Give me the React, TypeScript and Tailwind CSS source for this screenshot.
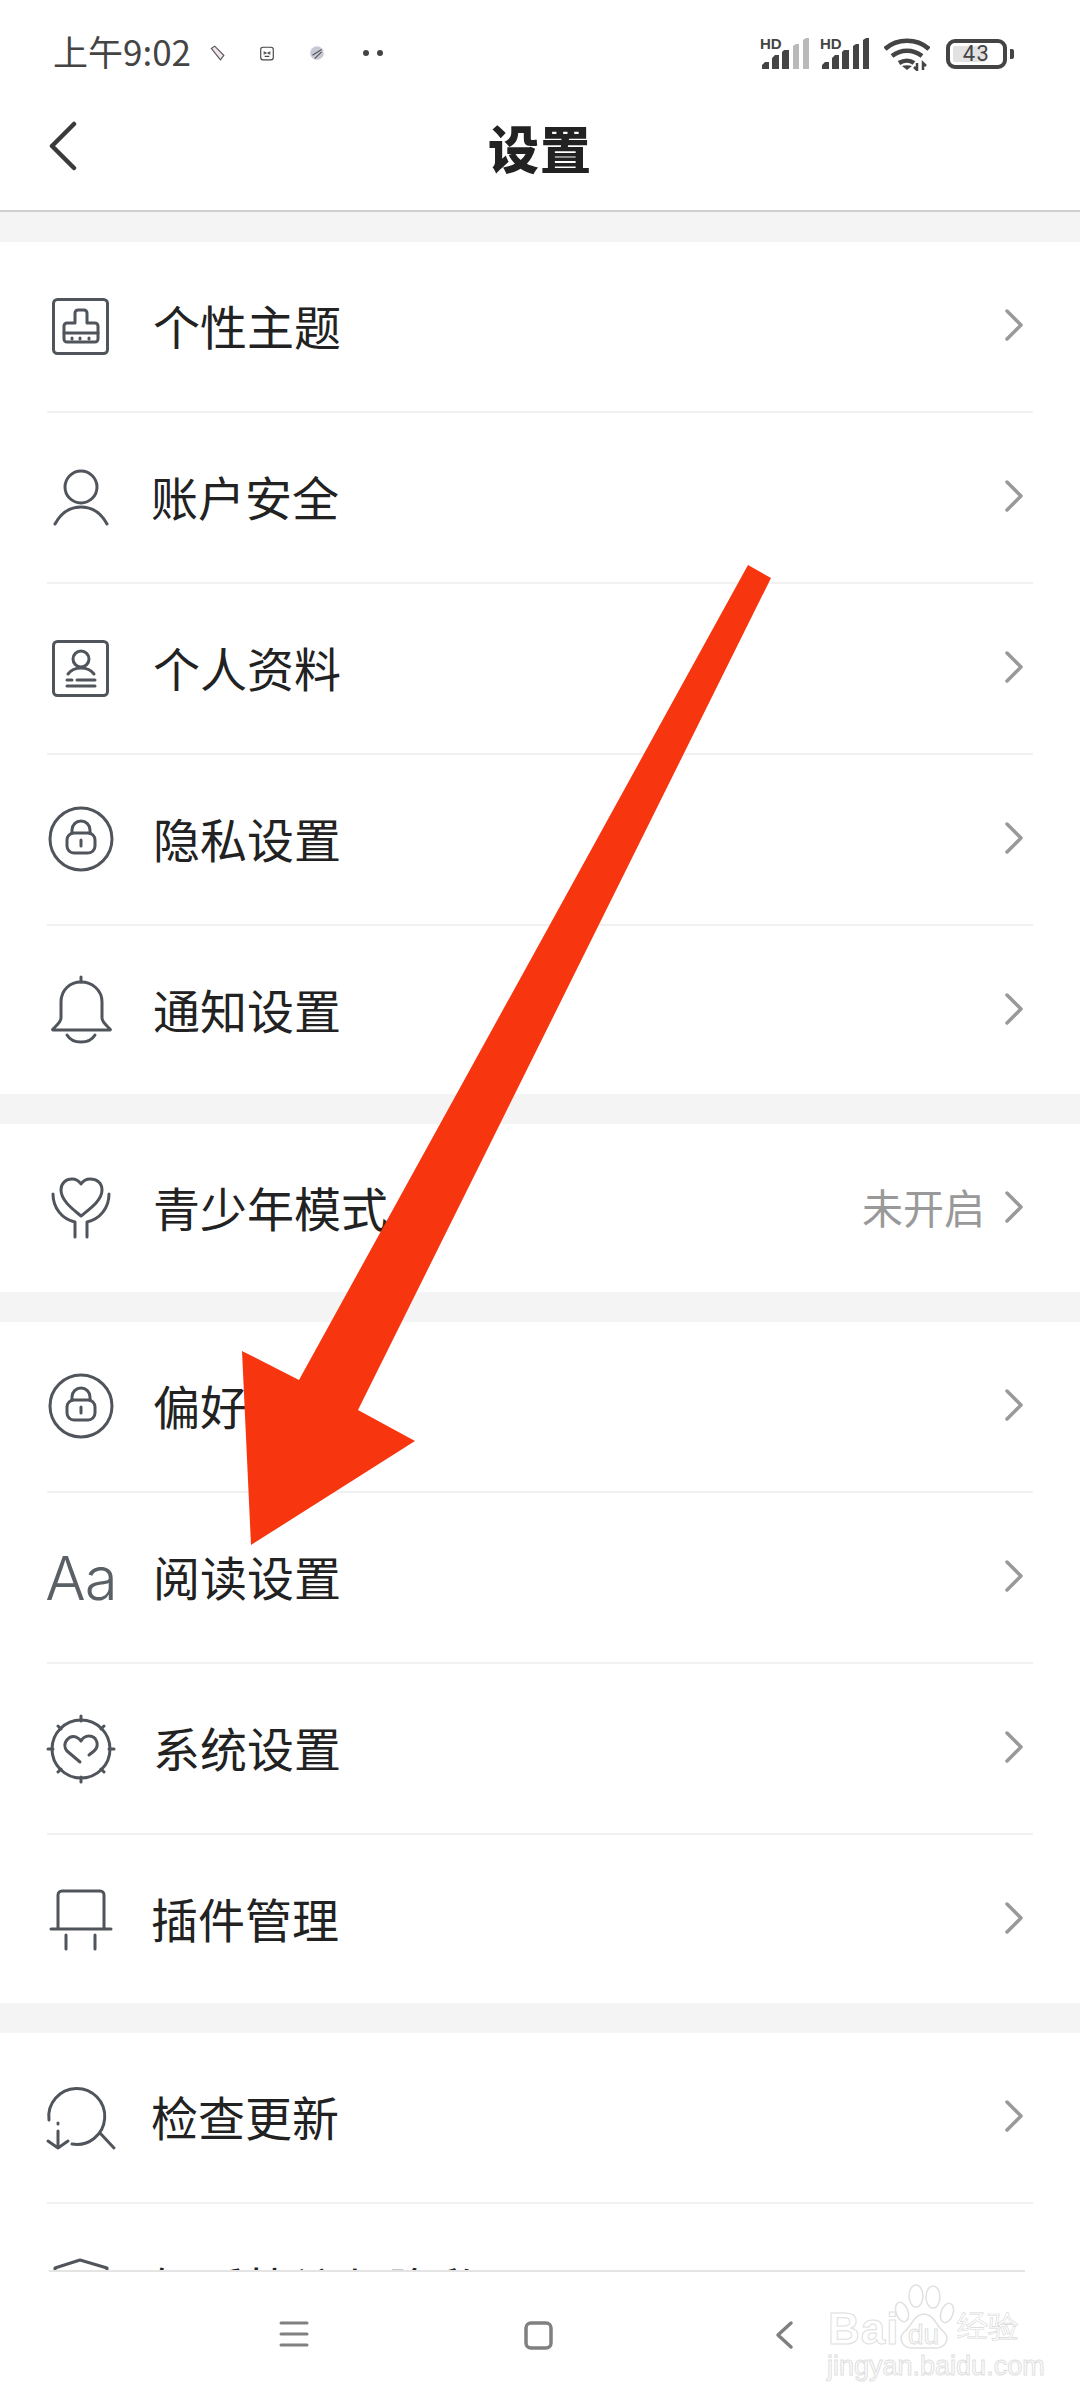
import type { ReactNode } from "react";

const iconStroke = "#50555c";

// every row icon is drawn in a 68x68 box, centred on the row
const RowIcon = ({ children }: { children: ReactNode }) => (
  <svg width="68" height="68" viewBox="0 0 68 68" fill="none" stroke={iconStroke} strokeWidth="3" strokeLinecap="round" strokeLinejoin="round" className="overflow-visible">
    {children}
  </svg>
);

const BrushIcon = () => (
  <RowIcon>
    <rect x="6.5" y="6.5" width="54" height="54" rx="4" />
    <path d="M28 30V20a3 3 0 0 1 3-3h6a3 3 0 0 1 3 3v10h8a3 3 0 0 1 3 3v13a3 3 0 0 1-3 3H20a3 3 0 0 1-3-3V33a3 3 0 0 1 3-3z" />
    <path d="M17 40h34M25 45v1M33 45v1M42 45v1" />
  </RowIcon>
);

const PersonIcon = () => (
  <RowIcon>
    <circle cx="34" cy="23" r="16" />
    <path d="M8 60C14 49 23 43 34 43s20 6 26 17" />
  </RowIcon>
);

const ProfileIcon = () => (
  <RowIcon>
    <rect x="6.5" y="6.5" width="54" height="54" rx="4" />
    <circle cx="34" cy="24" r="8" />
    <path d="M21 39c3-4 7-6 13-6s10 2 13 6" />
    <path d="M20 45h5M30 45h18M20 51h28" />
  </RowIcon>
);

const LockIcon = () => (
  <RowIcon>
    <circle cx="34" cy="33" r="31" />
    <rect x="20" y="27" width="28" height="20" rx="7" />
    <path d="M25 27v-3a9 9 0 0 1 18 0v3M34 34v6" />
  </RowIcon>
);

const BellIcon = () => (
  <RowIcon>
    <path d="M34 1v5" />
    <path d="M14 42V26C14 14 23 6 34 6s21 8 21 20v16c0 4 4 7 8 11 1 1 0 1-1 1H7c-1 0-2 0-1-1 4-4 8-7 8-11z" />
    <path d="M20 59c3 5 8 7 14 7s11-2 14-7" />
  </RowIcon>
);

const YouthIcon = () => (
  <RowIcon>
    <path d="M34 42C27 36 14 27 14 16 14 9 19 5 25 5c4 0 7 2 9 5 2-3 5-5 9-5 7 0 12 4 12 11 0 11-14 20-21 26z" />
    <path d="M6 20c0 14 9 25 22 28v15M62 20c0 14-9 25-22 28v15" />
  </RowIcon>
);

const SystemIcon = () => (
  <RowIcon>
    <circle cx="34" cy="34" r="29" />
    <path d="M34 1v5M34 62v5M1 34h5M62 34h5M11 11l3 3M57 11l-3 3M11 57l3-3M57 57l-3-3" />
    <path d="M33 47 20 36c-6-8 2-16 9-14 2 1 4 2 5 4 1-2 4-5 8-5 8 0 11 10 5 15l-5 4" />
  </RowIcon>
);

const PluginIcon = () => (
  <RowIcon>
    <path d="M11 44V10a4 4 0 0 1 4-4h38a4 4 0 0 1 4 4v34M4 44h60M19 50v14M48 50v14" />
  </RowIcon>
);

const UpdateIcon = () => (
  <RowIcon>
    <path d="M25 60A28 28 0 1 0 2 36" />
    <path d="m53 49 14 15M11 39v1M11 47v17M1 57l10 7 10-7" />
  </RowIcon>
);

const ShieldIcon = () => (
  <RowIcon>
    <path d="M8 14 33 6l27 8v24c0 12-12 20-26 26C20 58 8 50 8 38z" />
  </RowIcon>
);

const Chevron = () => (
  <svg width="18" height="32" viewBox="0 0 18 32" fill="none" stroke="#999" strokeWidth="3.5" strokeLinecap="round" strokeLinejoin="round">
    <path d="M2 2l14 14L2 30" />
  </svg>
);

const AaIcon = () => (
  <span className="font-['Inter',sans-serif] text-[60px] leading-none font-light tracking-[-1px] text-[#5b6067]">Aa</span>
);

type Row = { icon: ReactNode; label: string; tight?: boolean; value?: string };

const sections: Row[][] = [
  [
    { icon: <BrushIcon />, label: "个性主题" },
    { icon: <PersonIcon />, label: "账户安全", tight: true },
    { icon: <ProfileIcon />, label: "个人资料" },
    { icon: <LockIcon />, label: "隐私设置" },
    { icon: <BellIcon />, label: "通知设置" },
  ],
  [{ icon: <YouthIcon />, label: "青少年模式", value: "未开启" }],
  [
    { icon: <LockIcon />, label: "偏好设置" },
    { icon: <AaIcon />, label: "阅读设置" },
    { icon: <SystemIcon />, label: "系统设置" },
    { icon: <PluginIcon />, label: "插件管理", tight: true },
  ],
];

const SettingRow = ({ row, last }: { row: Row; last: boolean }) => (
  <div className={`mx-[47px] flex items-center ${last ? "h-[168px]" : "h-[171px] border-b-2 border-[#f1f1f1]"}`}>
    <div className="flex w-[68px] shrink-0 items-center justify-center">{row.icon}</div>
    <span className={`mb-[4px] text-[47px] leading-none text-[#222] ${row.tight ? "ml-[36px]" : "ml-[38px]"}`}>{row.label}</span>
    <div className="mr-[10px] mb-[3px] ml-auto flex items-center gap-[20px]">
      {row.value && <span className="text-[41px] leading-none text-[#999]">{row.value}</span>}
      <Chevron />
    </div>
  </div>
);

const Signal = ({ dim }: { dim?: boolean }) => (
  <svg width="52" height="32" viewBox="0 0 52 32" className="overflow-visible">
    <text x="0" y="11" fontFamily="Liberation Sans, sans-serif" fontWeight="700" fontSize="15" fill="#444">HD</text>
    <path d="M2 31v-4l3-3h4v7zM12 31V20l3-3h4v14zM22 31V14l2-2h5v19z" fill="#444" />
    <path d="M33 31V8l3-2h3v25zM43 31V2l3-2h3v31z" fill={dim ? "#b9b9b9" : "#444"} />
  </svg>
);

const Wifi = () => (
  <svg width="46" height="34" viewBox="0 0 46 34" fill="none" stroke="#444" strokeWidth="4.5">
    <path d="M1 12C13 1 33 1 45 12" />
    <path d="M8 19c9-7 21-7 30 0" />
    <path d="M15 26c5-3 11-3 15 0" />
    <path d="M23 33l-5-4c3-1 7-1 10 0z" fill="#444" stroke="none" />
    <path d="M33 26v7l-3-3M39 33v-7l3 3" strokeWidth="2.5" />
  </svg>
);

const Battery = () => (
  <div className="flex items-center gap-[3px]">
    <div className="relative flex h-[30px] w-[61px] items-center justify-center rounded-[9px] border-4 border-[#444]">
      <div className="absolute top-[3px] bottom-[3px] left-[3px] w-[32px] rounded-[2px] bg-[#e2e2e2]" />
      <span className="relative font-['Roboto',sans-serif] text-[22px] leading-none tracking-[1.5px] text-[#444]">43</span>
    </div>
    <div className="h-[10px] w-[4px] rounded-r-[2px] bg-[#444]" />
  </div>
);

const StatusBar = () => (
  <div className="flex h-[85px] items-start pt-[29px] pr-[66px] pl-[53px]">
    <span className="text-[35px] leading-[44px] text-[#444]">上午9:02</span>
    <div className="mt-[16px] ml-[18px] flex items-center">
      <svg width="16" height="16" viewBox="0 0 14 14" className="mr-[34px]">
        <path d="M2 3l3-2 8 8-3 4z" fill="#efe3ee" stroke="#555" strokeWidth="1" />
      </svg>
      <svg width="16" height="16" viewBox="0 0 14 14" className="mr-[34px]" fill="none" stroke="#444" strokeWidth="1">
        <rect x="1.5" y="2" width="11" height="11" rx="2" />
        <path d="M4 6l2 1-2 1M10 6L8 7l2 1M5 10h4" />
      </svg>
      <svg width="16" height="16" viewBox="0 0 14 14" className="mr-[38px]">
        <circle cx="7" cy="7" r="6" fill="#c7c9d6" />
        <path d="M3 9l8-5M5 12l6-6" stroke="#555" strokeWidth="1" />
      </svg>
      <span className="mr-[8px] h-[6px] w-[6px] rounded-full bg-[#444]" />
      <span className="h-[6px] w-[6px] rounded-full bg-[#444]" />
    </div>
    <div className="mt-[8px] ml-auto flex items-center">
      <Signal dim />
      <div className="ml-[8px]">
        <Signal />
      </div>
      <div className="mr-[16px] ml-[12px]">
        <Wifi />
      </div>
      <Battery />
    </div>
  </div>
);

const BottomNav = () => (
  <div className="absolute right-0 bottom-0 left-0 h-[130px] bg-white">
    <div className="mr-[55px] ml-[49px] border-t-2 border-[#e4e4e4]" />
    <svg width="1080" height="128" viewBox="0 2272 1080 128" fill="none" stroke="#808080" strokeLinecap="round" strokeLinejoin="round">
      <path d="M281 2323h26M281 2334h26M281 2345h26" strokeWidth="3" />
      <rect x="526" y="2323" width="25" height="25" rx="5" strokeWidth="3.5" />
      <path d="M791 2323l-13 12 13 12" strokeWidth="3.5" />
    </svg>
    {/* baidu watermark */}
    <div className="absolute top-[12px] left-[826px] h-[112px] w-[200px] font-['Liberation_Sans',sans-serif] text-white">
      <svg width="64" height="66" viewBox="0 0 64 66" fill="#fff" stroke="#e0e0e0" strokeWidth="1.5" className="absolute top-[2px] left-[66px]">
        <ellipse cx="24" cy="12" rx="7" ry="11" />
        <ellipse cx="41" cy="13" rx="7" ry="11" />
        <ellipse cx="10" cy="28" rx="6" ry="10" transform="rotate(-20 10 28)" />
        <ellipse cx="55" cy="29" rx="6" ry="10" transform="rotate(20 55 29)" />
        <path d="M32 30c-10 0-12 12-20 18-6 6-2 16 8 16h24c10 0 14-10 8-16-8-6-10-18-20-18z" />
      </svg>
      <span className="absolute top-[25px] left-[2px] text-[44px] leading-none font-bold tracking-[1px] [-webkit-text-stroke:1px_#e0e0e0]">Bai</span>
      <span className="absolute top-[39px] left-[82px] text-[28px] leading-none [-webkit-text-stroke:1px_#e0e0e0]">du</span>
      <span className="absolute top-[29px] left-[131px] text-[31px] leading-none [-webkit-text-stroke:0.6px_#d8d8d8]">经验</span>
      <span className="absolute top-[71px] left-[1px] text-[27px] leading-none [-webkit-text-stroke:1px_#e0e0e0]">jingyan.baidu.com</span>
    </div>
  </div>
);

const App = () => {
  return (
    <div className="relative h-[2400px] w-[1080px] overflow-hidden bg-white font-['Noto_Sans_CJK_SC',sans-serif]">
      <StatusBar />

      <header className="relative flex h-[127px] items-center justify-center border-b-2 border-[#cfcfcf]">
        <svg width="30" height="50" viewBox="0 0 30 50" fill="none" stroke="#3a3a3a" strokeWidth="4.5" strokeLinecap="round" strokeLinejoin="round" className="absolute top-[36px] left-[48px]">
          <path d="M26 3L4 25l22 22" />
        </svg>
        <h1 className="text-[51px] leading-none font-black tracking-[1px] text-[#222]">设置</h1>
      </header>

      <div className="flex flex-col bg-[#f4f4f4] pt-[30px]">
        {sections.map((rows, i) => (
          <div key={i} className="mb-[30px] bg-white">
            {rows.map((row, j) => (
              <SettingRow key={row.label} row={row} last={j === rows.length - 1} />
            ))}
          </div>
        ))}
        <div className="bg-white">
          <SettingRow row={{ icon: <UpdateIcon />, label: "检查更新", tight: true }} last={false} />
          <SettingRow row={{ icon: <ShieldIcon />, label: "知乎协议与隐私" }} last />
        </div>
      </div>

      <BottomNav />

      {/* red annotation arrow drawn over the screenshot */}
      <svg width="1080" height="2400" viewBox="0 0 1080 2400" className="absolute top-0 left-0">
        <polygon points="748,565 771,578 358,1410 415,1441 251,1545 242,1351 299,1380" fill="#f73610" />
      </svg>
    </div>
  );
};

export default App;
